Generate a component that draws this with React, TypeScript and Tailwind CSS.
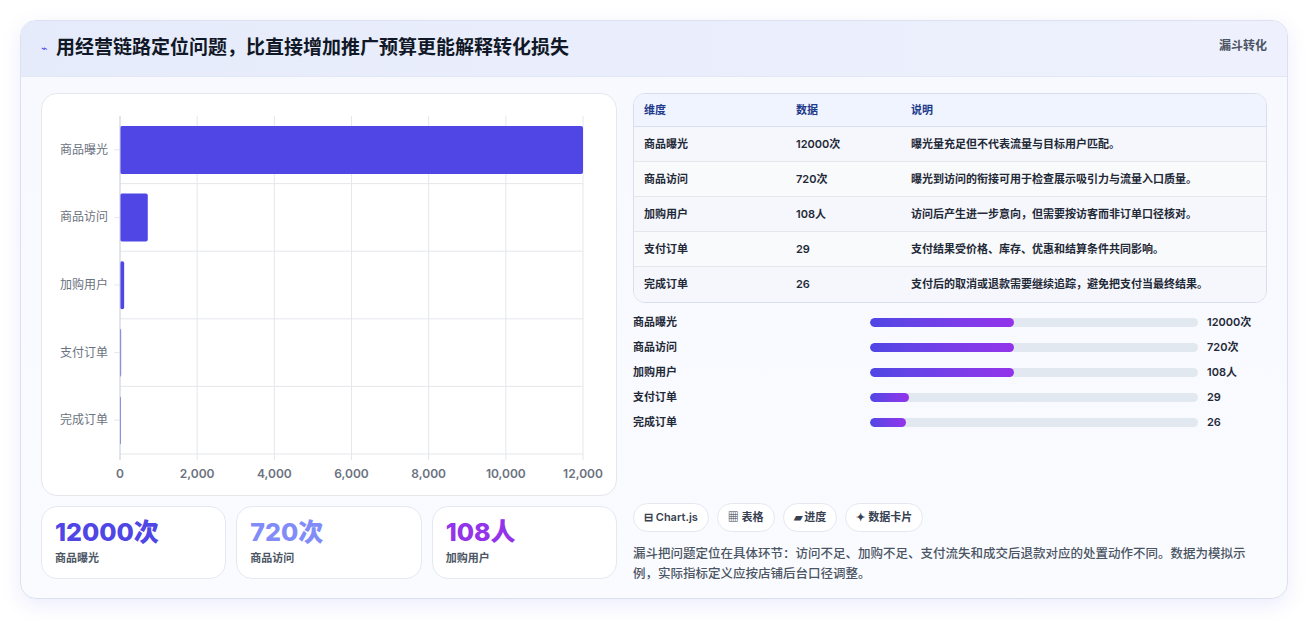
import React from 'react';

const rows = [
  { name: '商品曝光', value: '12000次', note: '曝光量充足但不代表流量与目标用户匹配。', raw: 12000, pct: 44 },
  { name: '商品访问', value: '720次', note: '曝光到访问的衔接可用于检查展示吸引力与流量入口质量。', raw: 720, pct: 44 },
  { name: '加购用户', value: '108人', note: '访问后产生进一步意向，但需要按访客而非订单口径核对。', raw: 108, pct: 44 },
  { name: '支付订单', value: '29', note: '支付结果受价格、库存、优惠和结算条件共同影响。', raw: 29, pct: 12 },
  { name: '完成订单', value: '26', note: '支付后的取消或退款需要继续追踪，避免把支付当最终结果。', raw: 26, pct: 11 },
];

function Chart() {
  const x0 = 78, x1 = 541, y0 = 22, band = 67.6;
  const ticks = [0, 2000, 4000, 6000, 8000, 10000, 12000];
  return (
    <svg width="576" height="403" className="block">
      {ticks.map((t) => {
        const x = x0 + ((x1 - x0) * t) / 12000;
        return (
          <g key={t}>
            <line x1={x} y1={y0} x2={x} y2={y0 + band * 5 + 6} stroke="#e5e7eb" />
            <text x={x} y={384} textAnchor="middle" fontSize="12" fontWeight="600" fill="#6b7280">
              {t.toLocaleString('en-US')}
            </text>
          </g>
        );
      })}
      {rows.map((r, i) => {
        const y = y0 + band * i;
        const w = ((x1 - x0) * r.raw) / 12000;
        return (
          <g key={r.name}>
            <line x1={x0} y1={y + band} x2={x1} y2={y + band} stroke="#e5e7eb" />
            <line x1={x0 - 6} y1={y + band / 2} x2={x0} y2={y + band / 2} stroke="#e5e7eb" />
            <rect x={x0} y={y + 10} width={Math.max(w, 1)} height={48} rx="2" fill="#4f46e5" />
            <text x={x0 - 12} y={y + band / 2 + 4} textAnchor="end" fontSize="12" fill="#6b7280">
              {r.name}
            </text>
          </g>
        );
      })}
      <line x1={x0} y1={y0} x2={x0} y2={y0 + band * 5 + 6} stroke="#d1d5db" />
    </svg>
  );
}

export default function App() {
  const font = { fontFamily: 'Inter, "Noto Sans CJK SC", sans-serif' };
  return (
    <div className="w-[1309px] h-[620px] bg-white pt-5 pl-5" style={font}>
      <div className="w-[1268px] h-[579px] rounded-2xl border border-[#dbe1f0] bg-gradient-to-b from-[#f8f9ff] to-[#fafbff] shadow-[0_6px_20px_rgba(99,102,241,0.12)] overflow-hidden">
        <div className="h-[56px] flex items-center justify-between px-5 bg-gradient-to-r from-[#e6ebfb] to-[#eef1fd] border-b border-[#e3e8f5]">
          <div className="flex items-center gap-2">
            <span className="text-[11px] text-[#4f46e5]">⌁</span>
            <h1 className="text-[19px] font-bold text-[#111827]">用经营链路定位问题，比直接增加推广预算更能解释转化损失</h1>
          </div>
          <span className="self-start mt-4 text-[12px] font-semibold text-[#4b5563]">漏斗转化</span>
        </div>
        <div className="flex gap-4 px-5 pt-4">
          <div className="w-[576px] flex flex-col gap-[10px]">
            <div className="h-[403px] rounded-2xl border border-[#e5e7eb] bg-white">
              <Chart />
            </div>
            <div className="grid grid-cols-3 gap-[10px]">
              {[
                ['12000次', '商品曝光', 'text-[#4f46e5]'],
                ['720次', '商品访问', 'text-[#818cf8]'],
                ['108人', '加购用户', 'text-[#9333ea]'],
              ].map(([v, l, c]) => (
                <div key={l} className="h-[73px] rounded-2xl border border-[#e3e8f3] bg-white px-[13px] pt-[10px]">
                  <div className={`text-[25px] font-extrabold leading-[30px] ${c}`}>{v}</div>
                  <div className="text-[11px] font-semibold text-[#4b5563] mt-[3px]">{l}</div>
                </div>
              ))}
            </div>
          </div>
          <div className="w-[638px] flex flex-col">
            <div className="rounded-xl border border-[#d8deec] overflow-hidden bg-white">
              <div className="grid grid-cols-[152px_115px_1fr] h-[33px] items-center px-[10px] bg-[#eff4fe] border-b border-[#d8deec] text-[11px] font-semibold text-[#1e3a8a]">
                <span>维度</span><span>数据</span><span>说明</span>
              </div>
              {rows.map((r, i) => (
                <div
                  key={r.name}
                  className={`grid grid-cols-[152px_115px_1fr] h-[35px] items-center px-[10px] text-[11px] font-semibold text-[#1f2937] ${i < 4 ? 'border-b border-[#e5e7eb]' : ''} ${i % 2 === 1 ? 'bg-[#f9fafb]' : 'bg-[#f5f7fc]'}`}
                >
                  <span>{r.name}</span><span>{r.value}</span><span>{r.note}</span>
                </div>
              ))}
            </div>
            <div className="mt-[12px] flex flex-col gap-[11px]">
              {rows.map((r) => (
                <div key={r.name} className="flex items-center h-[14px] text-[11px] font-semibold text-[#1f2937]">
                  <span className="w-[237px]">{r.name}</span>
                  <div className="w-[328px] h-[9px] rounded-full bg-[#e2e8f0] overflow-hidden">
                    <div className="h-full rounded-full bg-gradient-to-r from-[#4f46e5] to-[#9333ea]" style={{ width: `${r.pct}%` }} />
                  </div>
                  <span className="ml-[9px]">{r.value}</span>
                </div>
              ))}
            </div>
            <div className="mt-[74px] flex gap-2">
              {['⊟ Chart.js', '▦ 表格', '▰ 进度', '✦ 数据卡片'].map((t) => (
                <span key={t} className="h-[29px] px-[10px] flex items-center rounded-full border border-[#e3e8f0] bg-white text-[11px] font-semibold text-[#374151]">
                  {t}
                </span>
              ))}
            </div>
            <p className="mt-[12px] text-[12.5px] leading-[20px] text-[#4b5563] font-medium">
              漏斗把问题定位在具体环节：访问不足、加购不足、支付流失和成交后退款对应的处置动作不同。数据为模拟示例，实际指标定义应按店铺后台口径调整。
            </p>
          </div>
        </div>
      </div>
    </div>
  );
}
